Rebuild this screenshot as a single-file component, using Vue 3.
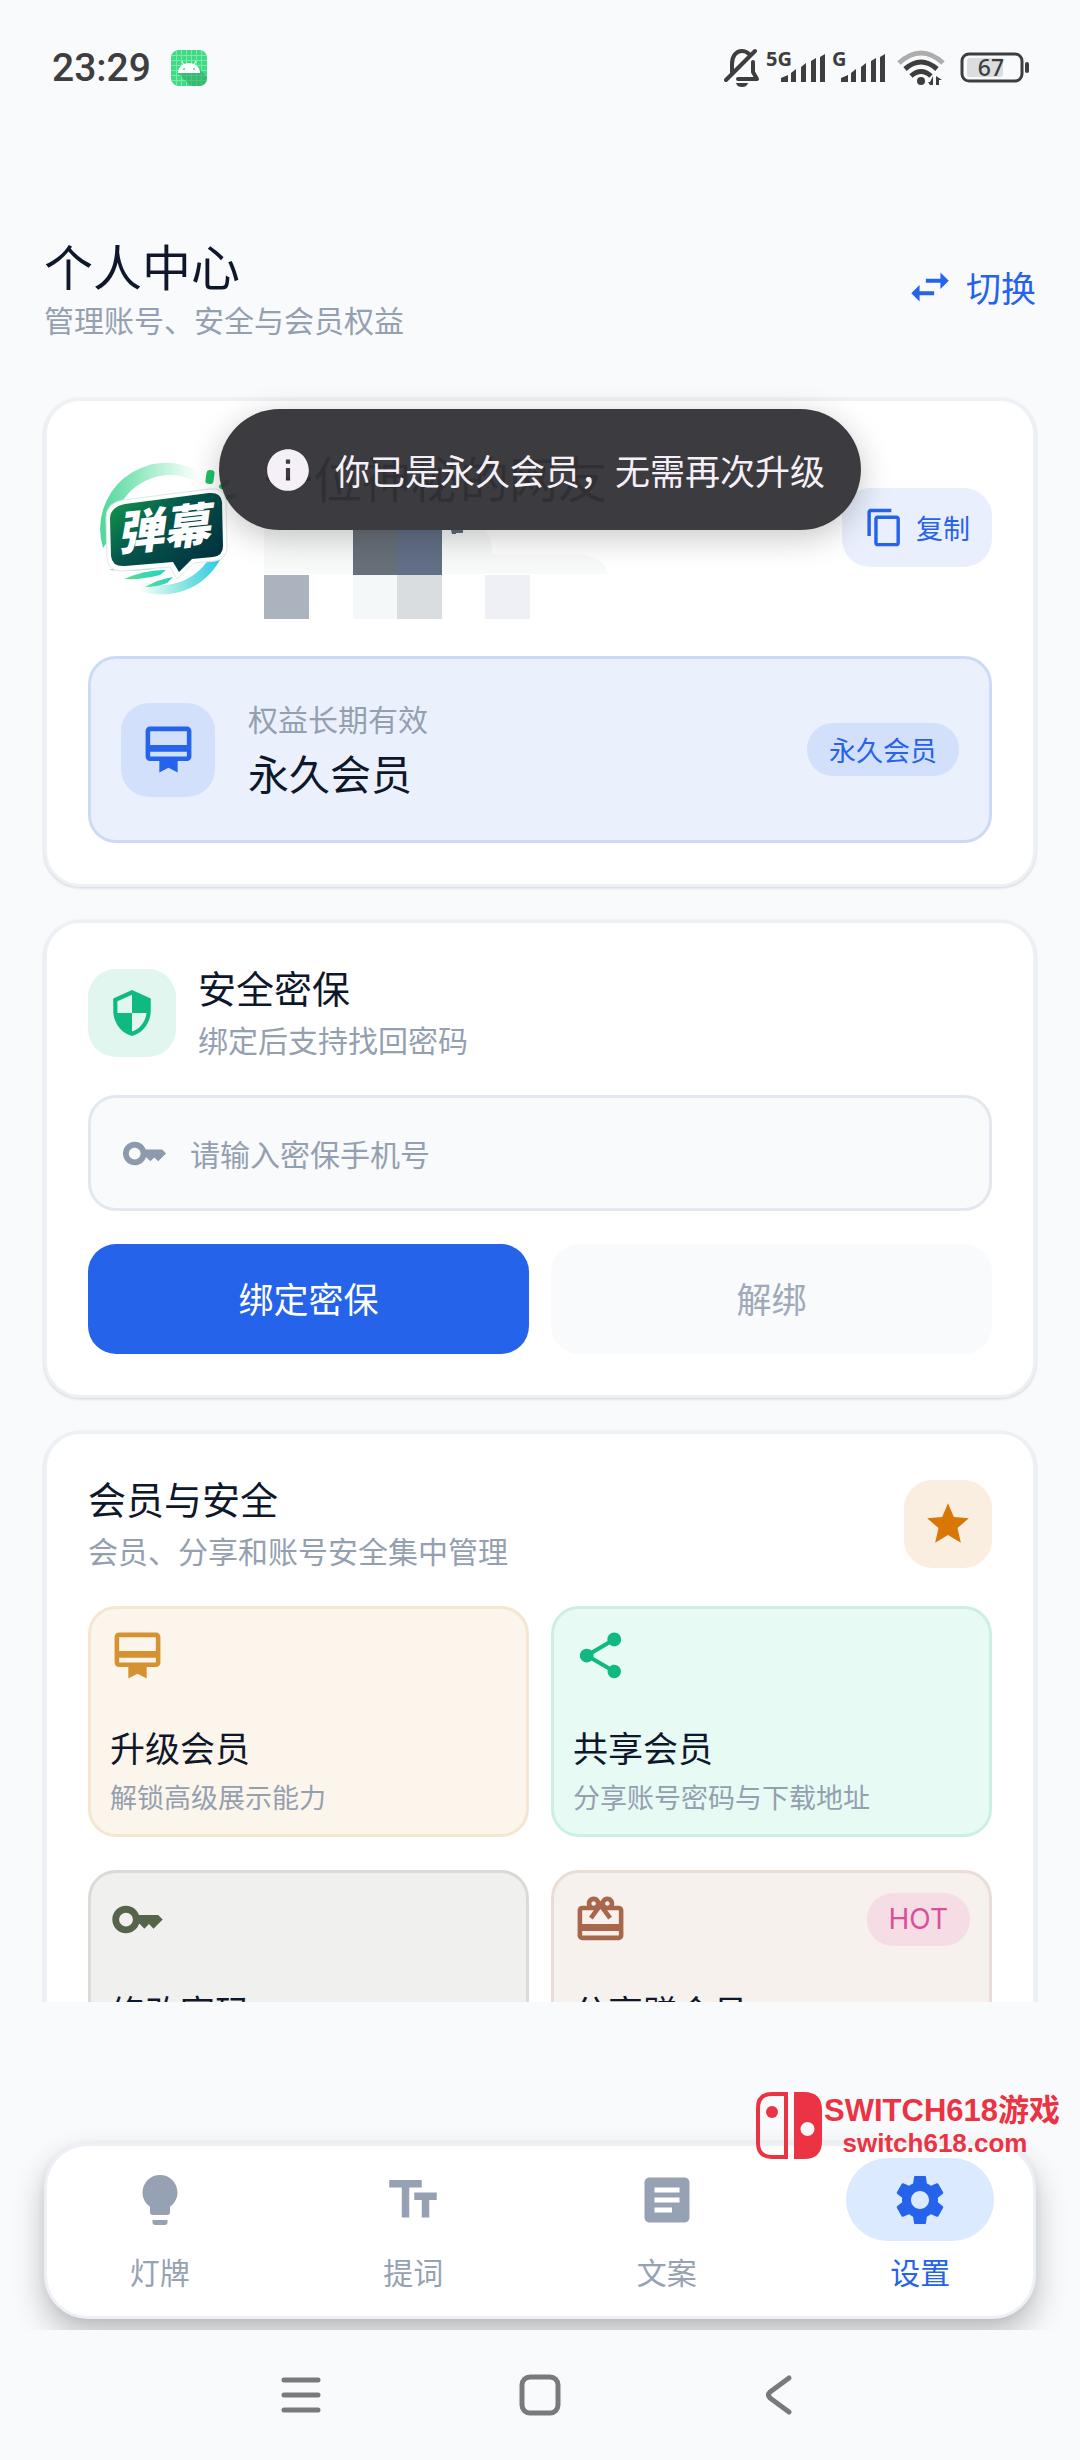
<script setup>
import { ref } from 'vue'

const icons = {
  card: 'M20 2H4c-1.11 0-2 .89-2 2v11c0 1.11.89 2 2 2h4v5l4-2 4 2v-5h4c1.11 0 2-.89 2-2V4c0-1.11-.89-2-2-2zm0 13H4v-2h16v2zm0-5H4V4h16v6z',
  shield: 'M12 1L3 5v6c0 5.55 3.84 10.74 9 12 5.16-1.26 9-6.45 9-12V5l-9-4zm0 10.99h7c-.53 4.12-3.28 7.79-7 8.94V12H5V6.3l7-3.11v8.8z',
  key: 'M21 10h-8.35C11.83 7.67 9.61 6 7 6c-3.31 0-6 2.69-6 6s2.69 6 6 6c2.61 0 4.83-1.67 5.65-4H13l2 2 2-2 2 2 4-4.04L21 10zM7 15c-1.65 0-3-1.35-3-3s1.35-3 3-3 3 1.35 3 3-1.35 3-3 3z',
  star: 'M12 17.27L18.18 21l-1.64-7.03L22 9.24l-7.19-.61L12 2 9.19 8.63 2 9.24l5.46 4.73L5.82 21z',
  share: 'M18 16.08c-.76 0-1.44.3-1.96.77L8.91 12.7c.05-.23.09-.46.09-.7s-.04-.47-.09-.7l7.05-4.11c.54.5 1.25.81 2.04.81 1.66 0 3-1.34 3-3s-1.34-3-3-3-3 1.34-3 3c0 .24.04.47.09.7L8.04 9.81C7.5 9.31 6.79 9 6 9c-1.66 0-3 1.34-3 3s1.34 3 3 3c.79 0 1.5-.31 2.04-.81l7.12 4.16c-.05.21-.08.43-.08.65 0 1.61 1.31 2.92 2.92 2.92 1.61 0 2.92-1.31 2.92-2.92s-1.31-2.92-2.92-2.92z',
  gift: 'M20 6h-2.18c.11-.31.18-.65.18-1 0-1.66-1.34-3-3-3-1.05 0-1.96.54-2.5 1.35l-.5.67-.5-.68C10.96 2.54 10.05 2 9 2 7.34 2 6 3.34 6 5c0 .35.07.69.18 1H4c-1.11 0-1.99.89-1.99 2L2 19c0 1.11.89 2 2 2h16c1.11 0 2-.89 2-2V8c0-1.11-.89-2-2-2zm-5-2c.55 0 1 .45 1 1s-.45 1-1 1-1-.45-1-1 .45-1 1-1zM9 4c.55 0 1 .45 1 1s-.45 1-1 1-1-.45-1-1 .45-1 1-1zm11 15H4v-2h16v2zm0-5H4V8h5.08L7 10.83 8.62 12 11 8.76l1-1.36 1 1.36L15.38 12 17 10.83 14.92 8H20v6z',
  copy: 'M16 1H4c-1.1 0-2 .9-2 2v14h2V3h12V1zm3 4H8c-1.1 0-2 .9-2 2v14c0 1.1.9 2 2 2h11c1.1 0 2-.9 2-2V7c0-1.1-.9-2-2-2zm0 16H8V7h11v14z',
  info: 'M12 2C6.48 2 2 6.48 2 12s4.48 10 10 10 10-4.48 10-10S17.52 2 12 2zm1 15h-2v-6h2v6zm0-8h-2V7h2v2z',
  swap: 'M6.99 11L3 15l3.99 4v-3H14v-2H6.99v-3zM21 9l-3.99-4v3H10v2h7.01v3L21 9z',
  bulb: 'M9 21c0 .5.4 1 1 1h4c.6 0 1-.5 1-1v-1H9v1zm3-19C8.1 2 5 5.1 5 9c0 2.4 1.2 4.5 3 5.7V17c0 .5.4 1 1 1h6c.6 0 1-.5 1-1v-2.3c1.8-1.3 3-3.4 3-5.7 0-3.9-3.1-7-7-7z',
  text: 'M2.5 4v3h5v12h3V7h5V4h-13zm19 5h-9v3h3v7h3v-7h3V9z',
  article: 'M19 3H5c-1.1 0-2 .9-2 2v14c0 1.1.9 2 2 2h14c1.1 0 2-.9 2-2V5c0-1.1-.9-2-2-2zm-5 14H7v-2h7v2zm3-4H7v-2h10v2zm0-4H7V7h10v2z',
  gear: 'M19.14 12.94c.04-.3.06-.61.06-.94 0-.32-.02-.64-.07-.94l2.03-1.58c.18-.14.23-.41.12-.61l-1.92-3.32c-.12-.22-.37-.29-.59-.22l-2.39.96c-.5-.38-1.03-.7-1.62-.94l-.36-2.54c-.04-.24-.24-.41-.48-.41h-3.84c-.24 0-.43.17-.47.41l-.36 2.54c-.59.24-1.13.57-1.62.94l-2.39-.96c-.22-.08-.47 0-.59.22L2.74 8.87c-.12.21-.08.47.12.61l2.03 1.58c-.05.3-.09.63-.09.94s.02.64.07.94l-2.03 1.58c-.18.14-.23.41-.12.61l1.92 3.32c.12.22.37.29.59.22l2.39-.96c.5.38 1.03.7 1.62.94l.36 2.54c.05.24.24.41.48.41h3.84c.24 0 .44-.17.47-.41l.36-2.54c.59-.24 1.13-.56 1.62-.94l2.39.96c.22.08.47 0 .59-.22l1.92-3.32c.12-.22.07-.47-.12-.61l-2.01-1.58zM12 15.6c-1.98 0-3.6-1.62-3.6-3.6s1.62-3.6 3.6-3.6 3.6 1.62 3.6 3.6-1.62 3.6-3.6 3.6z'
}

const tiles = [
  { id: 'upgrade', icon: 'card', title: '升级会员', desc: '解锁高级展示能力' },
  { id: 'shared', icon: 'share', title: '共享会员', desc: '分享账号密码与下载地址' },
  { id: 'password', icon: 'key', title: '修改密码', desc: '' },
  { id: 'invite', icon: 'gift', title: '分享赠会员', desc: '', tag: 'HOT' }
]

const tabs = [
  { id: 'lamp', icon: 'bulb', label: '灯牌' },
  { id: 'prompt', icon: 'text', label: '提词' },
  { id: 'copy', icon: 'article', label: '文案' },
  { id: 'settings', icon: 'gear', label: '设置' }
]

const activeTab = ref('settings')
const phone = ref('')
</script>

<template>
  <div class="page">
    <div class="status-bar">
      <div class="status-left">
        <span class="clock">23:29</span>
        <svg class="app-icon" viewBox="0 0 36 36">
          <rect width="36" height="36" rx="8" fill="#3ddc84" />
          <path d="M5.500 0v36M10.500 0v36M15.500 0v36M20.500 0v36M25.500 0v36M30.500 0v36M0 5.500h36M0 10.500h36M0 15.500h36M0 20.500h36M0 25.500h36M0 30.500h36" stroke="#7de8ab" stroke-width="1" />
          <path d="M7 23l13 13h8q8 0 8-8v-1l-7-8z" fill="#2fa866" opacity=".6" />
          <path d="M7 23c0-6 5-10 11-10s11 4 11 10z" fill="#fff" />
          <path d="M11 11l2 4M25 11l-2 4" stroke="#fff" stroke-width="1" />
          <circle cx="13" cy="19" r="1" fill="#3ddc84" />
          <circle cx="23" cy="19" r="1" fill="#3ddc84" />
        </svg>
      </div>
      <div class="status-right">
        <svg width="36" height="40" viewBox="0 0 36 40">
          <path d="M8 24V16C8 8 12 3 18 3c3 0 5 1 7 3M29 14v10l4 7H14" fill="none" stroke="#3e3e3e" stroke-width="4" stroke-linejoin="round" stroke-linecap="round" />
          <path d="M2 32L31 3" stroke="#3e3e3e" stroke-width="4" stroke-linecap="round" />
          <path d="M12 35h12c-1 3-3 4-6 4s-5-1-6-4z" fill="#3e3e3e" />
        </svg>
        <svg width="60" height="56" viewBox="0 -8 60 56">
          <text class="net" x="0" y="18">5G</text>
          <path d="M15 34v-4l7-3v7zM25 34V25l5-4v13zM35 34V19l5-4v19zM45 34V13l5-3v24zM54 34V9l5-3v28z" fill="#3e3e3e" />
        </svg>
        <svg width="54" height="56" viewBox="0 -8 54 56">
          <text class="net" x="0" y="18">G</text>
          <path d="M9 34v-4l7-3v7zM19 34V25l5-4v13zM29 34V19l5-4v19zM39 34V13l5-3v24zM48 34V9l5-3v28z" fill="#3e3e3e" />
        </svg>
        <svg width="62" height="40" viewBox="0 0 62 40">
          <g fill="none" stroke-width="5">
            <path d="M7 15Q29-5 51 15" stroke="#adadad" />
            <path d="M13 21Q29 7 45 21" stroke="#3e3e3e" />
            <path d="M19 28Q29 19 39 28" stroke="#3e3e3e" />
          </g>
          <circle cx="29" cy="33" r="4" fill="#3e3e3e" />
          <path d="M41 28v9h-3l-2-3h2zM44 37v-9l6 4h-3v5z" fill="#3e3e3e" />
        </svg>
        <svg width="70" height="40" viewBox="0 0 70 40">
          <rect x="2" y="6" width="60" height="27" rx="7" fill="none" stroke="#3e3e3e" stroke-width="3" />
          <rect x="7" y="10" width="36" height="19" rx="3" fill="#dcdddf" />
          <rect x="65" y="14" width="4" height="11" rx="2" fill="#3e3e3e" />
          <text class="battery" x="31" y="28" text-anchor="middle">67</text>
        </svg>
      </div>
    </div>

    <main class="content">
      <header class="header">
        <div>
          <h1>个人中心</h1>
          <p class="muted">管理账号、安全与会员权益</p>
        </div>
        <button class="switch">
          <svg class="icon icon-md" viewBox="0 0 24 24"><path :d="icons.swap" /></svg>
          <span>切换</span>
        </button>
      </header>

      <section class="card">
        <div class="profile">
          <svg class="avatar" viewBox="-2 -3 154 154">
            <defs>
              <linearGradient id="ringA" x1="0" y1="0" x2="1" y2="0">
                <stop offset="0" stop-color="#4fd79b" />
                <stop offset=".5" stop-color="#a5edcb" />
                <stop offset="1" stop-color="#fff" />
              </linearGradient>
              <linearGradient id="ringB" x1="0" y1="0" x2="1" y2="0">
                <stop offset="0" stop-color="#fff" />
                <stop offset=".5" stop-color="#8fe6e0" />
                <stop offset="1" stop-color="#22c8e8" />
              </linearGradient>
              <linearGradient id="bubble" x1="0" y1="0" x2="1" y2=".8">
                <stop offset="0" stop-color="#15a04c" />
                <stop offset=".45" stop-color="#05574c" />
                <stop offset="1" stop-color="#01303f" />
              </linearGradient>
              <linearGradient id="speed" x1="0" y1="0" x2="1" y2="0">
                <stop offset="0" stop-color="#5fdc8a" />
                <stop offset="1" stop-color="#1ed3c9" />
              </linearGradient>
            </defs>
            <path d="M13 95A66 66 0 0 1 108 18L103 27A56 56 0 0 0 24 80z" fill="url(#ringA)" />
            <path d="M134 98A66 66 0 0 1 48 137L53 129A56 56 0 0 0 122 100z" fill="url(#ringB)" />
            <g fill="#1fbf68">
              <rect x="116" y="17" width="8" height="14" rx="3" transform="rotate(8 120 24)" />
              <rect x="128" y="29" width="12" height="5" rx="2" transform="rotate(-40 134 31)" />
              <rect x="135" y="41" width="12" height="5" rx="2" transform="rotate(-12 141 43)" />
            </g>
            <g fill="url(#speed)">
              <path d="M19 117q24-8 48-6l-4 5q-22 3-44 1z" />
              <path d="M34 126q20-9 42-9l-6 5q-18 5-36 4z" />
              <path d="M55 134q14-8 28-10l-6 6q-10 4-22 4z" />
            </g>
            <path d="M33 47L119 36Q134 34 136 47L137 94Q137 106 125 108L104 110 87 126 80 114 33 118Q18 119 17 105L16 65Q16 50 33 47z" fill="#fff" stroke="#dfe8e6" stroke-width="1" />
            <path d="M35 51L119 40Q131 39 132 49L133 93Q133 103 123 104L102 106 89 119 83 109 35 113Q22 114 21 103L20 66Q20 54 35 51z" fill="url(#bubble)" />
            <text class="avatar-text" x="28" y="98" transform="rotate(-6 28 98)">弹幕</text>
          </svg>
          <div class="profile-info">
            <div class="name">一位神秘的网友</div>
            <svg class="mosaic" viewBox="0 0 344 89">
              <path d="M0 0H220Q228 6 228 24H316Q340 26 344 44H0z" fill="#f8f9f9" />
              <rect x="89" width="44" height="45" fill="#676f78" />
              <rect x="133" width="45" height="45" fill="#626f86" />
              <path d="M187 0h12v3h-7v1h-4z" fill="#5b6b7f" />
              <rect y="45" width="45" height="44" fill="#abb4be" />
              <rect x="89" y="45" width="44" height="44" fill="#f5f8f9" />
              <rect x="133" y="45" width="45" height="44" fill="#dadde0" />
              <rect x="221" y="45" width="45" height="44" fill="#eff0f6" />
            </svg>
          </div>
          <button class="copy-btn">
            <svg class="icon icon-sm" viewBox="0 0 24 24"><path :d="icons.copy" /></svg>
            <span>复制</span>
          </button>
        </div>
        <div class="member">
          <div class="member-icon">
            <svg class="icon icon-lg" viewBox="0 0 24 24"><path :d="icons.card" /></svg>
          </div>
          <div class="member-text">
            <p class="muted">权益长期有效</p>
            <p class="member-name">永久会员</p>
          </div>
          <span class="tag">永久会员</span>
        </div>
      </section>

      <section class="card">
        <div class="card-head">
          <div class="head-icon green">
            <svg class="icon icon-md" viewBox="0 0 24 24"><path :d="icons.shield" /></svg>
          </div>
          <div class="head-text">
            <h2>安全密保</h2>
            <p class="muted">绑定后支持找回密码</p>
          </div>
        </div>
        <label class="field">
          <svg class="icon icon-key" viewBox="0 0 24 24"><path :d="icons.key" /></svg>
          <input v-model="phone" type="tel" placeholder="请输入密保手机号" aria-label="密保手机号" />
        </label>
        <div class="actions">
          <button class="btn primary">绑定密保</button>
          <button class="btn" disabled>解绑</button>
        </div>
      </section>

      <section class="card">
        <div class="card-head">
          <div class="head-text">
            <h2>会员与安全</h2>
            <p class="muted">会员、分享和账号安全集中管理</p>
          </div>
          <div class="head-icon orange">
            <svg class="icon icon-md" viewBox="0 0 24 24"><path :d="icons.star" /></svg>
          </div>
        </div>
        <div class="tiles">
          <button v-for="t in tiles" :key="t.id" class="tile" :class="t.id">
            <span class="tile-top">
              <svg class="icon icon-lg" viewBox="0 0 24 24"><path :d="icons[t.icon]" /></svg>
              <span v-if="t.tag" class="tag hot">{{ t.tag }}</span>
            </span>
            <span class="tile-title">{{ t.title }}</span>
            <span class="tile-desc">{{ t.desc }}</span>
          </button>
        </div>
      </section>
    </main>

    <div class="nav-wrap">
      <nav class="nav">
        <button
          v-for="t in tabs"
          :key="t.id"
          class="nav-item"
          :class="{ active: activeTab === t.id }"
          @click="activeTab = t.id"
        >
          <span class="pill">
            <svg class="icon icon-nav" viewBox="0 0 24 24"><path :d="icons[t.icon]" /></svg>
          </span>
          <span>{{ t.label }}</span>
        </button>
      </nav>
      <div class="watermark">
        <svg width="66" height="67" viewBox="0 0 66 67">
          <path d="M16 2H30V65H16Q2 65 2 51V16Q2 2 16 2z" fill="none" stroke="#eb3343" stroke-width="4" />
          <circle cx="16" cy="20" r="6" fill="#eb3343" />
          <path fill-rule="evenodd" d="M38 0H48Q66 0 66 18V49Q66 67 48 67H38zM51 30a7 7 0 1 0 1 14 7 7 0 0 0-1-14z" fill="#eb3343" />
        </svg>
        <div class="watermark-text">
          <div class="wm-title">SWITCH618游戏</div>
          <div class="wm-url">switch618.com</div>
        </div>
      </div>
    </div>

    <div class="system-bar">
      <button aria-label="最近任务">
        <svg width="48" height="48" viewBox="0 0 48 48"><path d="M7 9h34M7 24h34M7 39h34" /></svg>
      </button>
      <button aria-label="主页">
        <svg width="48" height="48" viewBox="0 0 48 48"><rect x="6" y="6" width="36" height="36" rx="8" /></svg>
      </button>
      <button aria-label="返回">
        <svg width="48" height="48" viewBox="0 0 48 48"><path d="M34 7L15 21Q12 24 15 27L34 41" /></svg>
      </button>
    </div>

    <div class="toast" role="status">
      <svg class="icon icon-md" viewBox="0 0 24 24"><path :d="icons.info" /></svg>
      <span>你已是永久会员，无需再次升级</span>
    </div>
  </div>
</template>

<style>
body {
  background: #f9fafc;
}
</style>

<style scoped>
.page {
  position: relative;
  display: flex;
  flex-direction: column;
  height: 100vh;
  background: #f9fafc;
  color: #0f172a;
  font-family: "Noto Sans CJK SC", "Noto Sans", sans-serif;
}
h1, h2, p {
  margin: 0;
  font-weight: 400;
}
button {
  border: 0;
  padding: 0;
  background: none;
  color: inherit;
  font-family: inherit;
  cursor: pointer;
}
svg {
  display: block;
  flex-shrink: 0;
}
.icon { fill: currentColor; }
.icon-sm { width: 41px; height: 41px; }
.icon-key { width: 47px; height: 47px; }
.icon-md { width: 50px; height: 50px; }
.icon-lg { width: 55px; height: 55px; }
.icon-nav { width: 60px; height: 60px; }

.status-bar {
  display: flex;
  justify-content: space-between;
  align-items: center;
  height: 136px;
  padding: 0 50px 0 52px;
  flex-shrink: 0;
}
.status-left {
  display: flex;
  align-items: center;
  gap: 20px;
}
.clock {
  font-family: Roboto, sans-serif;
  font-size: 39px;
  font-weight: 500;
  line-height: 40px;
  color: #3e3e3e;
}
.app-icon {
  width: 36px;
  height: 36px;
}
.status-right {
  display: flex;
  align-items: center;
  gap: 6px;
}
.net {
  font: 700 20px "Noto Sans", sans-serif;
  fill: #3e3e3e;
}
.battery {
  font: 500 23px "Noto Sans", sans-serif;
  fill: #3e3e3e;
}

.content {
  flex: 1;
  min-height: 0;
  overflow-y: auto;
  scrollbar-width: none;
  padding: 0 44px;
  margin-bottom: 81px;
}
.header {
  display: flex;
  justify-content: space-between;
  align-items: center;
  padding: 99px 0 59px;
}
h1 {
  font-size: 49px;
  line-height: 60px;
  margin-bottom: 4px;
}
.muted {
  font-size: 30px;
  line-height: 40px;
  color: #94a0b0;
}
.switch {
  display: flex;
  align-items: center;
  gap: 11px;
  font-size: 35px;
  line-height: 50px;
  color: #2563eb;
}

.card {
  padding: 41px;
  margin-bottom: 33px;
  background: #fff;
  border: 3px solid #edf0f4;
  border-radius: 36px;
  box-shadow: 0 1px 3px rgba(15, 23, 42, 0.18);
}
.profile {
  display: flex;
  align-items: center;
  gap: 22px;
  height: 170px;
  margin-bottom: 44px;
}
.avatar {
  width: 154px;
  height: 154px;
}
.avatar-text {
  font: italic 900 47px "Noto Sans CJK SC", sans-serif;
  fill: #fff;
}
.profile-info {
  flex: 1;
  min-width: 0;
  align-self: flex-start;
}
.name {
  font-size: 49px;
  line-height: 70px;
  margin-bottom: 18px;
  white-space: nowrap;
}
.mosaic {
  width: 344px;
  height: 89px;
}
.copy-btn {
  display: flex;
  align-items: center;
  gap: 11px;
  padding: 0 22px;
  height: 79px;
  border-radius: 28px;
  background: #e9effd;
  color: #2563eb;
  font-size: 27px;
}
.member {
  display: flex;
  align-items: center;
  height: 181px;
  padding: 0 30px;
  background: #eaf1fd;
  border: 3px solid #cbdaf5;
  border-radius: 28px;
}
.member-icon {
  display: grid;
  place-items: center;
  width: 94px;
  height: 94px;
  border-radius: 28px;
  background: #d3e0fb;
  color: #2563eb;
}
.member-text {
  flex: 1;
  padding: 0 0 2px 33px;
}
.member-name {
  margin-top: 8px;
  font-size: 41px;
  line-height: 53px;
}
.tag {
  padding: 0 22px;
  border-radius: 26px;
  background: #d3e0fb;
  color: #2563eb;
  font-size: 27px;
  line-height: 53px;
}

.card-head {
  display: flex;
  align-items: center;
  gap: 22px;
  margin-bottom: 33px;
}
.head-icon {
  display: grid;
  place-items: center;
  width: 88px;
  height: 88px;
  border-radius: 28px;
}
.head-icon.green {
  background: #e0f6ee;
  color: #10b981;
}
.head-icon.orange {
  background: #faeee0;
  color: #d97706;
}
.head-text {
  flex: 1;
  padding-bottom: 3px;
}
h2 {
  font-size: 38px;
  line-height: 46px;
  margin-bottom: 9px;
}
.field {
  display: flex;
  align-items: center;
  gap: 22px;
  height: 110px;
  padding: 0 30px;
  border: 3px solid #e2e8ee;
  border-radius: 28px;
  background: #f8fafc;
  color: #8d9aac;
}
.field input {
  flex: 1;
  min-width: 0;
  padding: 0;
  border: 0;
  outline: 0;
  background: none;
  color: #0f172a;
  font-family: inherit;
  font-size: 30px;
  line-height: 40px;
}
.field input::placeholder {
  color: #94a0b0;
  opacity: 1;
}
.actions {
  display: grid;
  grid-template-columns: 1fr 1fr;
  gap: 22px;
  margin-top: 33px;
}
.btn {
  height: 110px;
  padding-bottom: 3px;
  border-radius: 28px;
  background: #f8fafc;
  font-size: 35px;
}
.btn:disabled {
  color: #9ea9b9;
}
.btn.primary {
  background: #2563eb;
  color: #fff;
}

.tiles {
  display: grid;
  grid-template-columns: 1fr 1fr;
  gap: 33px 22px;
}
.tile {
  display: flex;
  flex-direction: column;
  height: 231px;
  padding: 19px;
  border: 3px solid;
  border-radius: 28px;
  text-align: left;
}
.tile-top {
  display: flex;
  justify-content: space-between;
  align-items: center;
  margin-bottom: auto;
}
.tile-title {
  font-size: 35px;
  line-height: 48px;
  margin-bottom: 8px;
  color: #0f172a;
}
.tile-desc {
  min-height: 36px;
  font-size: 27px;
  line-height: 36px;
  color: #94a0b0;
}
.upgrade { background: #fcf5eb; border-color: #f5e6d1; color: #d69230; }
.shared { background: #e7faf4; border-color: #ccefe3; color: #10b981; }
.password { background: #f0f0ee; border-color: #d9dbd7; color: #566549; }
.invite { background: #f6f1ed; border-color: #eaddd7; color: #a8664a; }
.tag.hot {
  background: #f6dde5;
  color: #d9509a;
  font-family: Inter, sans-serif;
  font-size: 28px;
}

.nav-wrap {
  position: relative;
  flex-shrink: 0;
  padding: 60px 44px 11px;
  overflow: hidden;
}
.nav {
  display: grid;
  grid-template-columns: repeat(4, 1fr);
  gap: 28px;
  height: 158px;
  padding-top: 12px;
  background: #fff;
  border: 3px solid #edf0f5;
  border-radius: 44px;
  box-shadow: 0 16px 32px rgba(0, 0, 0, 0.24), 0 2px 8px rgba(0, 0, 0, 0.06);
}
.nav-item {
  display: flex;
  flex-direction: column;
  align-items: center;
  gap: 10px;
  font-size: 30px;
  line-height: 40px;
  color: #96a2b3;
}
.pill {
  display: grid;
  place-items: center;
  width: 148px;
  height: 83px;
  border-radius: 42px;
}
.nav-item.active {
  color: #2563eb;
}
.nav-item.active .pill {
  background: #dbeafe;
}
.watermark {
  position: absolute;
  top: 9px;
  right: 20px;
  display: flex;
  align-items: center;
  gap: 2px;
  color: #eb3343;
  font-family: "Liberation Sans", "Noto Sans CJK SC", sans-serif;
  font-weight: 700;
}
.watermark-text {
  text-align: center;
}
.wm-title {
  font-size: 31px;
  line-height: 34px;
  white-space: nowrap;
}
.wm-url {
  padding-right: 14px;
  font-size: 26px;
  line-height: 30px;
}

.system-bar {
  display: flex;
  justify-content: center;
  align-items: center;
  gap: 191px;
  height: 130px;
  flex-shrink: 0;
}
.system-bar svg {
  fill: none;
  stroke: #7a7a7a;
  stroke-width: 5;
  stroke-linecap: round;
  stroke-linejoin: round;
}

.toast {
  position: absolute;
  top: 409px;
  left: 50%;
  transform: translateX(-50%);
  display: flex;
  align-items: center;
  gap: 22px;
  height: 121px;
  padding: 0 36px 0 44px;
  border-radius: 61px;
  background: rgba(50, 48, 53, 0.95);
  box-shadow: 0 8px 32px rgba(0, 0, 0, 0.22);
  color: #f5eff7;
  font-size: 35px;
  white-space: nowrap;
}
</style>
